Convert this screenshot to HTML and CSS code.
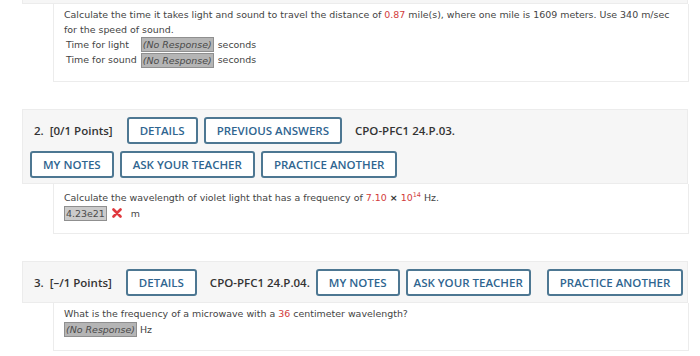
FILE: index.html
```html
<!DOCTYPE html>
<html lang="en">
<head>
    <meta charset="UTF-8">
    <title>Questions</title>
    <link rel="stylesheet" href="styles.css">
</head>
<body>
    <div class="page">
        <!-- question 1 (header scrolled off) -->
        <div class="question">
            <div class="q-head cut"></div>
            <div class="q-body first">
                <p>Calculate the time it takes light and sound to travel the distance of <span class="num">0.87</span> mile(s), where one mile is 1609 meters. Use 340 m/sec for the speed of sound.</p>
                <table class="answers">
                    <tr>
                        <td>Time for light</td>
                        <td><span class="resp">(No Response)</span></td>
                        <td>seconds</td>
                    </tr>
                    <tr>
                        <td>Time for sound</td>
                        <td><span class="resp">(No Response)</span></td>
                        <td>seconds</td>
                    </tr>
                </table>
            </div>
        </div>

        <!-- question 2 -->
        <div class="question">
            <div class="q-head">
                <span class="q-title">2.&nbsp; [0/1 Points]</span>
                <span class="btn">DETAILS</span>
                <span class="btn">PREVIOUS ANSWERS</span>
                <span class="q-code">CPO-PFC1 24.P.03.</span>
                <span class="break"></span>
                <span class="btn">MY NOTES</span>
                <span class="btn">ASK YOUR TEACHER</span>
                <span class="btn">PRACTICE ANOTHER</span>
            </div>
            <div class="q-body second">
                <p>Calculate the wavelength of violet light that has a frequency of <span class="num">7.10</span> <b class="times">&times;</b> <span class="num">10<sup>14</sup></span> Hz.</p>
                <p><span class="given">4.23e21</span>
                    <svg class="wrong" width="10" height="10" viewBox="0 0 10 10"><path d="M1.5 1.5L8.5 8.5M8.5 1.5L1.5 8.5" stroke="#e0393e" stroke-width="2.6" stroke-linecap="round"/></svg>
                    <span class="unit">m</span></p>
            </div>
        </div>

        <!-- question 3 -->
        <div class="question">
            <div class="q-head single">
                <span class="q-title">3.&nbsp; [&ndash;/1 Points]</span>
                <span class="btn">DETAILS</span>
                <span class="q-code">CPO-PFC1 24.P.04.</span>
                <span class="btn">MY NOTES</span>
                <span class="btn tight">ASK YOUR TEACHER</span>
                <span class="btn spaced">PRACTICE ANOTHER</span>
            </div>
            <div class="q-body third">
                <p>What is the frequency of a microwave with a <span class="num">36</span> centimeter wavelength?</p>
                <p><span class="resp">(No Response)</span> Hz</p>
            </div>
        </div>
    </div>
</body>
</html>
```

FILE: styles.css
```css
/*reset*/
* {
    padding: 0;
    margin: 0;
    box-sizing: border-box;
}

/*default*/
body {
    font: 9.45px/14.5px "DejaVu Sans", Verdana, sans-serif;
    color: #444;
    background-color: #fff;
}

/*main*/
.page {
    width: 689px;
    padding-left: 22px;
}
.question {
    margin-bottom: 27px;
}
.question:last-child {
    margin-bottom: 0;
}
.q-head {
    display: flex;
    flex-wrap: wrap;
    align-items: center;
    column-gap: 6px;
    width: 666px;
    padding: 7px 7px 5px;
    background-color: #f6f6f6;
    border: 1px solid #ececec;
    font: 600 11.5px/14px "Open Sans", sans-serif;
    color: #333;
}
.q-head.single {
    flex-wrap: nowrap;
    white-space: nowrap;
    padding-bottom: 6px;
}
.q-head.cut {
    height: 4px;
    padding: 0;
    border-top: none;
}
.q-title {
    padding: 0 8px 0 4px;
}
.q-code {
    padding-left: 7px;
}
.break {
    flex-basis: 100%;
    height: 7px;
}
.btn {
    display: inline-block;
    flex-shrink: 0;
    padding: 4.5px 11px;
    border: 2px solid #4d7792;
    border-radius: 3px;
    background-color: #fff;
    color: #2f6590;
}
.btn.tight {
    padding-left: 6px;
    padding-right: 6px;
}
.btn.spaced {
    margin-left: 10px;
}
.q-body {
    margin-left: 31px;
    width: 636px;
    padding: 4px 10px 13px;
    background-color: #fff;
    border: 1px solid #ececec;
    border-top: none;
}
.q-body.second {
    padding-top: 7px;
    padding-bottom: 12px;
}
.q-body.third {
    padding-top: 4px;
}
.num {
    color: #d23b3b;
}
.num sup {
    font-size: 6.5px;
    vertical-align: 4px;
    line-height: 0;
}
.times {
    font-weight: bold;
    color: #333;
}
.answers {
    border-collapse: collapse;
}
.answers td {
    padding: 0 2px;
    height: 15px;
}
.resp,
.given {
    display: inline-block;
    line-height: 13px;
    padding: 0 1px;
    background-color: #b5b5b5;
    border: 1px solid #8f8f8f;
    color: #4a4a4a;
}
.resp {
    font-style: italic;
}
.given {
    background-color: #cbcbcb;
}
.wrong {
    vertical-align: -1px;
    margin: 0 6px 0 2px;
}
```
